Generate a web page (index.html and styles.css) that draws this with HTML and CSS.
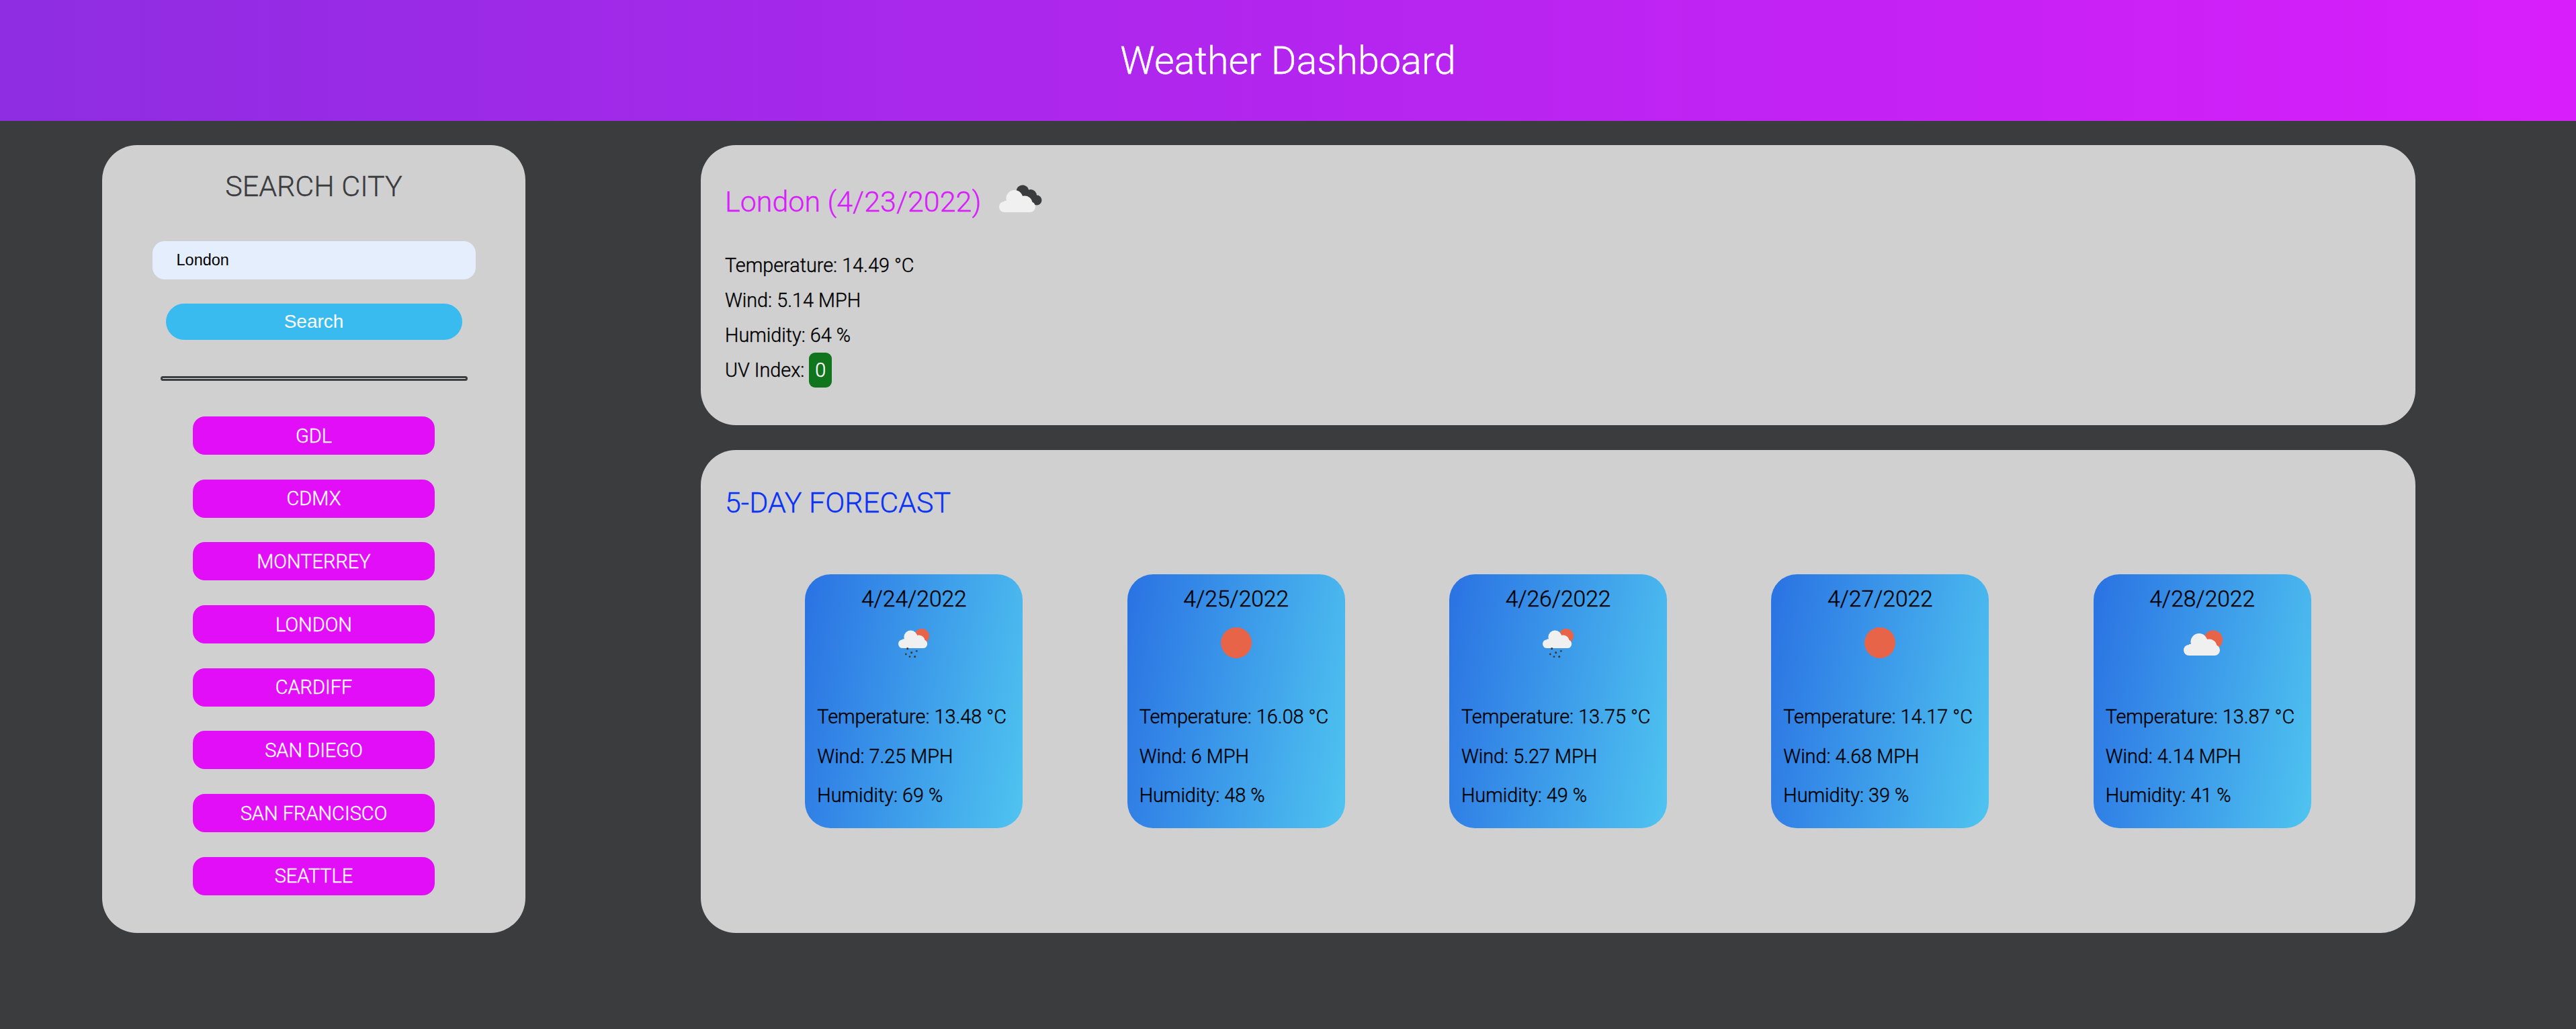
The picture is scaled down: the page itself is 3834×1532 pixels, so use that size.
FILE: index.html
```html
<!DOCTYPE html>
<html lang="en">
<head>
    <meta charset="UTF-8">
    <title>Weather Dashboard</title>
    <link rel="stylesheet" href="styles.css">
</head>
<body>
<svg class="defs" width="0" height="0">
    <defs>
        <g id="cloud">
            <circle cx="30" cy="61" r="8"/>
            <circle cx="45" cy="48.5" r="12.5"/>
            <circle cx="60" cy="56" r="11.5"/>
            <circle cx="68" cy="61" r="8"/>
            <rect x="30" y="52" width="38" height="17"/>
        </g>
    </defs>
</svg>
<header class="top-bar">
    <h1 class="page-title">Weather Dashboard</h1>
</header>
<div class="page">
    <aside class="panel search-panel">
        <h2 class="search-title">SEARCH CITY</h2>
        <input class="city-input" type="text" value="London">
        <button class="search-btn">Search</button>
        <hr class="divider">
        <button class="city-btn">GDL</button>
        <button class="city-btn">CDMX</button>
        <button class="city-btn">MONTERREY</button>
        <button class="city-btn">LONDON</button>
        <button class="city-btn">CARDIFF</button>
        <button class="city-btn">SAN DIEGO</button>
        <button class="city-btn">SAN FRANCISCO</button>
        <button class="city-btn">SEATTLE</button>
    </aside>
    <main class="content">
        <section class="panel today">
            <div class="today-head">
                <h2 class="today-title">London (4/23/2022)</h2>
                <svg class="icon" viewBox="0 0 100 100">
                    <g class="dark">
                        <circle cx="57" cy="38" r="9.5"/>
                        <circle cx="69" cy="44" r="9"/>
                        <circle cx="78" cy="51" r="7.5"/>
                    </g>
                    <use href="#cloud" class="white"/>
                </svg>
            </div>
            <p class="today-row">Temperature: 14.49 °C</p>
            <p class="today-row">Wind: 5.14 MPH</p>
            <p class="today-row">Humidity: 64 %</p>
            <p class="today-row">UV Index: <span class="uv">0</span></p>
        </section>
        <section class="panel forecast">
            <h2 class="forecast-title">5-DAY FORECAST</h2>
            <div class="cards">
                <article class="card">
                    <div class="card-date">4/24/2022</div>
                    <svg class="icon" viewBox="0 0 100 100">
                        <circle class="sun" cx="62" cy="40" r="11"/>
                        <use href="#cloud" class="white" transform="translate(9.4 2.8) scale(.8)"/>
                        <g class="dark">
                            <circle cx="40.7" cy="58.7" r="1.6"/>
                            <circle cx="46.7" cy="64.7" r="1.6"/>
                            <circle cx="54.3" cy="62.3" r="1.4"/>
                            <circle cx="38.3" cy="67" r="1.4"/>
                            <circle cx="44" cy="70.7" r="1.4"/>
                            <circle cx="51.7" cy="70.7" r="1.6"/>
                        </g>
                    </svg>
                    <p class="card-row">Temperature: 13.48 °C</p>
                    <p class="card-row">Wind: 7.25 MPH</p>
                    <p class="card-row">Humidity: 69 %</p>
                </article>
                <article class="card">
                    <div class="card-date">4/25/2022</div>
                    <svg class="icon" viewBox="0 0 100 100">
                        <circle class="sun" cx="50" cy="50" r="23"/>
                    </svg>
                    <p class="card-row">Temperature: 16.08 °C</p>
                    <p class="card-row">Wind: 6 MPH</p>
                    <p class="card-row">Humidity: 48 %</p>
                </article>
                <article class="card">
                    <div class="card-date">4/26/2022</div>
                    <svg class="icon" viewBox="0 0 100 100">
                        <circle class="sun" cx="62" cy="40" r="11"/>
                        <use href="#cloud" class="white" transform="translate(9.4 2.8) scale(.8)"/>
                        <g class="dark">
                            <circle cx="40.7" cy="58.7" r="1.6"/>
                            <circle cx="46.7" cy="64.7" r="1.6"/>
                            <circle cx="54.3" cy="62.3" r="1.4"/>
                            <circle cx="38.3" cy="67" r="1.4"/>
                            <circle cx="44" cy="70.7" r="1.4"/>
                            <circle cx="51.7" cy="70.7" r="1.6"/>
                        </g>
                    </svg>
                    <p class="card-row">Temperature: 13.75 °C</p>
                    <p class="card-row">Wind: 5.27 MPH</p>
                    <p class="card-row">Humidity: 49 %</p>
                </article>
                <article class="card">
                    <div class="card-date">4/27/2022</div>
                    <svg class="icon" viewBox="0 0 100 100">
                        <circle class="sun" cx="50" cy="50" r="23"/>
                    </svg>
                    <p class="card-row">Temperature: 14.17 °C</p>
                    <p class="card-row">Wind: 4.68 MPH</p>
                    <p class="card-row">Humidity: 39 %</p>
                </article>
                <article class="card">
                    <div class="card-date">4/28/2022</div>
                    <svg class="icon" viewBox="0 0 100 100">
                        <circle class="sun" cx="66" cy="45.5" r="14"/>
                        <use href="#cloud" class="white"/>
                    </svg>
                    <p class="card-row">Temperature: 13.87 °C</p>
                    <p class="card-row">Wind: 4.14 MPH</p>
                    <p class="card-row">Humidity: 41 %</p>
                </article>
            </div>
        </section>
    </main>
</div>
</body>
</html>
```

FILE: styles.css
```css
* {
    box-sizing: border-box;
}
body {
    margin: 0;
    min-height: 1532px;
    background: #3b3c3e;
    font-family: Roboto, "Liberation Sans", sans-serif;
    font-weight: 300;
    color: #000;
    -webkit-text-stroke: .4px;
}
.defs {
    display: block;
    height: 0;
}
.top-bar {
    height: 180px;
    display: flex;
    align-items: center;
    justify-content: center;
    background: linear-gradient(90deg, #8e2de2, #d81efb);
}
.page-title {
    margin: 0;
    font-size: 57.5px;
    font-weight: 300;
    color: #fff;
}
.page {
    display: flex;
    gap: 261px;
    padding: 36px 239px 0 152px;
}
.panel {
    background: #d0d0d0;
    border-radius: 52px;
}

/* left column */
.search-panel {
    width: 630px;
    height: 1173px;
    flex: none;
    display: flex;
    flex-direction: column;
    align-items: center;
    padding-top: 32px;
}
.search-title {
    margin: 0 0 52px;
    height: 59px;
    line-height: 59px;
    font-size: 43px;
    font-weight: 300;
    color: #3b3c3e;
}
.city-input {
    width: 481px;
    height: 57px;
    padding: 0 36px;
    border: 0;
    border-radius: 18px;
    background: #e4eefd;
    font-family: "Liberation Sans", sans-serif;
    font-size: 23.5px;
    color: #000;
    -webkit-text-stroke: 0;
}
.search-btn {
    width: 441px;
    height: 54px;
    margin-top: 36px;
    border: 0;
    border-radius: 27px;
    background: #3abbf0;
    font-family: "Liberation Sans", sans-serif;
    font-size: 28px;
    color: #fff;
    -webkit-text-stroke: 0;
}
.divider {
    width: 457px;
    height: 7px;
    margin: 54px 0 53px;
    border: 3px solid #3b3c3e;
    border-radius: 4px;
    background: #e8e8e8;
}
.city-btn {
    width: 360px;
    height: 57px;
    flex: none;
    margin-bottom: 36.7px;
    border: 0;
    border-radius: 18px;
    background: #e20ef8;
    font-family: Roboto, sans-serif;
    font-size: 29px;
    font-weight: 300;
    color: #fff;
}

/* right column */
.content {
    flex: 1;
    display: flex;
    flex-direction: column;
    gap: 37px;
}
.today {
    height: 417px;
    padding: 31px 36px 0;
}
.today-head {
    display: flex;
    align-items: center;
    height: 100px;
    margin-bottom: 22px;
}
.today-title {
    margin: 6px 0 0;
    font-size: 43px;
    font-weight: 300;
    color: #d81efb;
}
.today-head .icon {
    margin-left: 5px;
}
.today-row {
    margin: 0;
    height: 52px;
    line-height: 52px;
    font-size: 28.8px;
}
.uv {
    display: inline-block;
    width: 34px;
    height: 52px;
    border-radius: 9px;
    background: #10751c;
    color: #fff;
    text-align: center;
}
.forecast {
    height: 719px;
}
.forecast-title {
    margin: 0;
    padding: 48px 36px 0;
    height: 185px;
    line-height: 60px;
    font-size: 43px;
    font-weight: 300;
    color: #0a32f5;
}
.cards {
    display: flex;
    justify-content: space-evenly;
}
.card {
    width: 324px;
    height: 378px;
    padding: 15px 18px 0;
    border-radius: 38px;
    background: linear-gradient(100deg, #2a72e3, #4fc4f0);
}
.card-date {
    height: 44px;
    line-height: 44px;
    text-align: center;
    font-size: 33.5px;
}
.icon {
    display: block;
    width: 100px;
    height: 100px;
    flex: none;
}
.card .icon {
    margin: -7px auto 31px;
}
.card-row {
    margin: 0;
    height: 58.5px;
    line-height: 58.5px;
    font-size: 28.8px;
    white-space: nowrap;
}
.sun {
    fill: #e76448;
}
.white {
    fill: #f0f0f0;
}
.dark {
    fill: #3b3c3e;
}
```
